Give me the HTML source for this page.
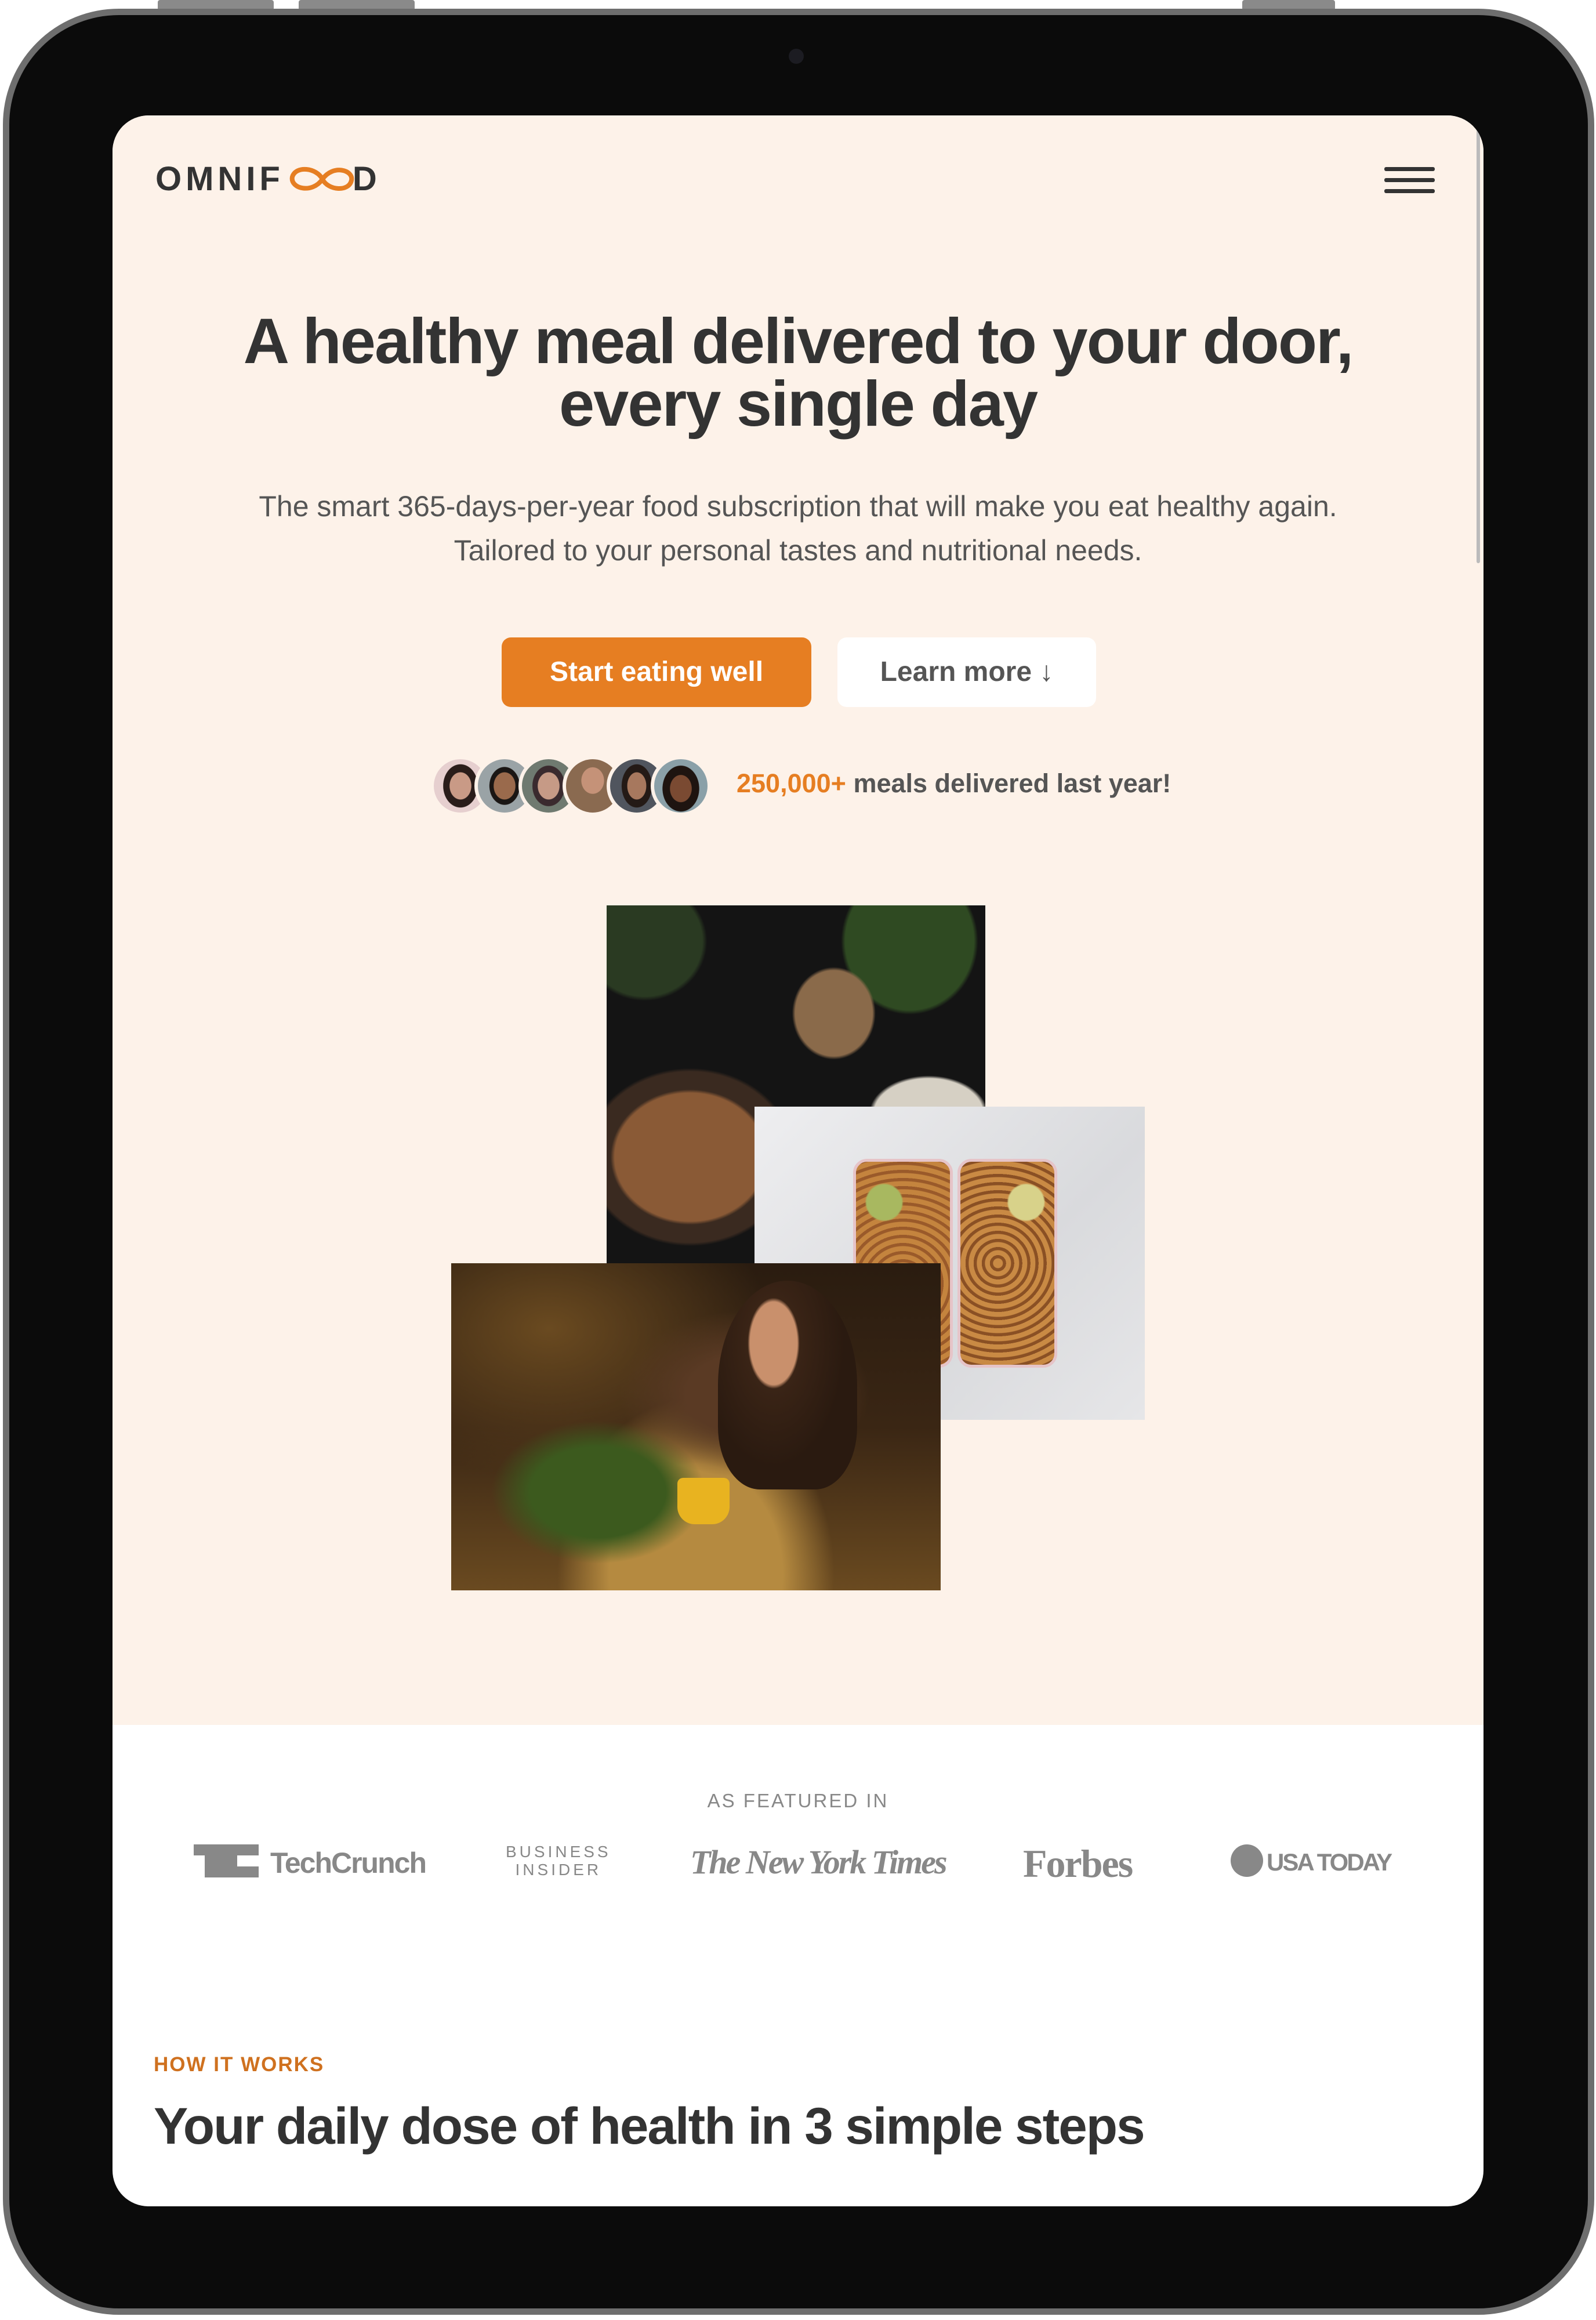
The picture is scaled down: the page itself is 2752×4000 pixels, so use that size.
<!DOCTYPE html>
<html><head><meta charset="utf-8">
<style>
*{margin:0;padding:0;box-sizing:border-box}
html,body{width:2752px;height:4000px;background:#fff;overflow:hidden;font-family:"Liberation Sans",sans-serif}
.abs{position:absolute}
.frame{left:5px;top:15px;width:2744px;height:3976px;border-radius:200px;background:#0b0b0b;border:11px solid #6e6e6e}
.screen{left:194px;top:199px;width:2364px;height:3605px;border-radius:62px;background:#fff;overflow:hidden}
.hero{left:0;top:0;width:2364px;height:2775px;background:#fdf2e9}
.t{position:absolute;white-space:nowrap}
</style></head><body>
<div class="abs" style="left:272px;top:0;width:200px;height:18px;background:#8a8a8a;border-radius:4px"></div>
<div class="abs" style="left:515px;top:0;width:200px;height:18px;background:#8a8a8a;border-radius:4px"></div>
<div class="abs" style="left:2142px;top:0;width:160px;height:18px;background:#8a8a8a;border-radius:4px"></div>
<div class="abs frame"></div>
<div class="abs" style="left:1360px;top:84px;width:26px;height:26px;border-radius:50%;background:#1c1c22"></div>
<div class="abs screen">
 <div class="abs hero"></div>
 <!-- logo -->
 <div class="t" style="left:74px;top:80px;font-size:58px;letter-spacing:7px;color:#333;font-weight:700;line-height:60px">OMNIF<span style="display:inline-block;width:118px"></span>D</div>
 <svg class="abs" style="left:302px;top:82px" width="120" height="56" viewBox="0 0 120 56"><path d="M60 28 C50 8 14 4 8 24 C4 44 42 54 60 28 C78 2 114 12 110 30 C106 50 70 48 60 28Z" fill="none" stroke="#e67e22" stroke-width="8"/></svg>
 <!-- hamburger -->
 <div class="abs" style="left:2193px;top:89px;width:87px;height:7px;background:#333;border-radius:3px"></div>
 <div class="abs" style="left:2193px;top:108px;width:87px;height:7px;background:#333;border-radius:3px"></div>
 <div class="abs" style="left:2193px;top:127px;width:87px;height:7px;background:#333;border-radius:3px"></div>
 <div class="abs" style="left:2352px;top:0;width:6px;height:772px;background:#bbb;border-radius:3px"></div>
 <!-- headline -->
 <div class="t" style="left:0;width:2364px;top:336px;text-align:center;font-size:110px;line-height:108px;font-weight:700;color:#333;letter-spacing:-2px">A healthy meal delivered to your door,<br>every single day</div>
 <div class="t" style="left:0;width:2364px;top:636px;text-align:center;font-size:50px;line-height:76px;color:#555">The smart 365-days-per-year food subscription that will make you eat healthy again.<br>Tailored to your personal tastes and nutritional needs.</div>
 <!-- buttons -->
 <div class="abs" style="left:671px;top:900px;width:534px;height:120px;background:#e67e22;border-radius:16px;color:#fff;font-weight:700;font-size:48px;line-height:120px;text-align:center">Start eating well</div>
 <div class="abs" style="left:1250px;top:900px;width:446px;height:120px;background:#fff;border-radius:16px;color:#555;font-weight:700;font-size:48px;line-height:120px;text-align:center">Learn more ↓</div>
 <!-- avatars -->
 <div class="abs" style="left:548px;top:1104px;height:104px;width:500px">
  <div class="abs" style="left:0;width:104px;height:104px;border-radius:50%;border:6px solid #fdf2e9;background:radial-gradient(ellipse 40% 50% at 50% 50%,#c99a86 50%,#2a1d1a 52%,#2a1d1a 80%,#e6cfcf 82%)"></div>
  <div class="abs" style="left:76px;width:104px;height:104px;border-radius:50%;border:6px solid #fdf2e9;background:radial-gradient(ellipse 40% 50% at 50% 50%,#9a6a4c 50%,#1a1614 52%,#1a1614 70%,#9aa3a6 72%)"></div>
  <div class="abs" style="left:152px;width:104px;height:104px;border-radius:50%;border:6px solid #fdf2e9;background:radial-gradient(ellipse 40% 50% at 50% 50%,#c69a86 50%,#3a2a2e 52%,#3a2a2e 75%,#6f7a70 77%)"></div>
  <div class="abs" style="left:228px;width:104px;height:104px;border-radius:50%;border:6px solid #fdf2e9;background:radial-gradient(ellipse 30% 35% at 50% 40%,#c59278 70%,#8a6a50 72%),#25324a"></div>
  <div class="abs" style="left:304px;width:104px;height:104px;border-radius:50%;border:6px solid #fdf2e9;background:radial-gradient(ellipse 35% 50% at 50% 50%,#a7785e 50%,#241a16 52%,#241a16 80%,#50555e 82%)"></div>
  <div class="abs" style="left:380px;width:104px;height:104px;border-radius:50%;border:6px solid #fdf2e9;background:radial-gradient(ellipse 40% 50% at 50% 55%,#7a4a32 50%,#1e1410 52%,#1e1410 85%,#8aa0a8 87%)"></div>
 </div>
 <div class="t" style="left:1076px;top:1124px;font-size:45px;line-height:56px;font-weight:700;color:#555"><span style="color:#e67e22">250,000+</span> meals delivered last year!</div>
 <!-- images -->
 <div class="abs" style="left:852px;top:1362px;width:653px;height:620px;background:radial-gradient(ellipse at 60% 30%,#8a6a4a 0 12%,transparent 13%),radial-gradient(ellipse at 85% 58%,#d6d0c4 0 12%,transparent 13%),radial-gradient(ellipse at 22% 70%,#8a5a36 0 18%,#3a2a20 19% 24%,transparent 25%),radial-gradient(ellipse at 80% 10%,#2f4a22 0 15%,transparent 16%),radial-gradient(ellipse at 10% 10%,#2a3a22 0 12%,transparent 13%),#141414"></div>
 <div class="abs" style="left:1107px;top:1709px;width:673px;height:540px;background:linear-gradient(135deg,#eeeef0,#d9dadd 60%,#e6e6e8)">
  <div class="abs" style="left:170px;top:90px;width:172px;height:360px;border-radius:24px;border:5px solid #e6c4c8;background:radial-gradient(circle at 30% 20%,#a8b860 0 10%,transparent 11%),repeating-radial-gradient(circle at 50% 60%,#c4843e 0 8px,#9a5a2a 9px 14px)"></div>
  <div class="abs" style="left:350px;top:90px;width:172px;height:360px;border-radius:24px;border:5px solid #e6c4c8;background:radial-gradient(circle at 70% 20%,#d8d28a 0 10%,transparent 11%),repeating-radial-gradient(circle at 40% 50%,#c98a44 0 8px,#8a5024 9px 14px)"></div>
 </div>
 <div class="abs" style="left:584px;top:1979px;width:844px;height:564px;background:radial-gradient(ellipse at 60% 40%,#5a3a24 0 14%,transparent 30%),radial-gradient(ellipse at 30% 70%,#3c5a1e 0 14%,transparent 22%),radial-gradient(ellipse at 50% 95%,#b58a40 0 25%,transparent 40%),radial-gradient(ellipse at 20% 20%,#6a4a20,transparent 40%),linear-gradient(180deg,#2a1c10,#3a2614 50%,#6a4a20)">
  <div class="abs" style="left:460px;top:30px;width:240px;height:360px;border-radius:50% 50% 30% 30%;background:radial-gradient(ellipse at 40% 30%,#c9906c 0 20%,#3a2416 22%,#2a1a10 60%)"></div>
  <div class="abs" style="left:390px;top:370px;width:90px;height:80px;border-radius:10px 10px 30px 30px;background:#e8b320"></div>
 </div>
 <!-- featured -->
 <div class="t" style="left:0;width:2364px;top:2887px;text-align:center;font-size:33px;letter-spacing:3px;color:#888;font-weight:500">AS FEATURED IN</div>
 <div class="abs" style="left:140px;top:2981px;width:75px;height:19px;background:#888"></div>
 <div class="abs" style="left:159px;top:2981px;width:37px;height:57px;background:#888"></div>
 <div class="abs" style="left:215px;top:2981px;width:37px;height:19px;background:#888"></div>
 <div class="abs" style="left:196px;top:3019px;width:56px;height:19px;background:#888"></div>
 <div class="abs" style="left:196px;top:2981px;width:19px;height:57px;background:#888"></div>
 <div class="t" style="left:272px;top:2984px;font-size:50px;font-weight:700;color:#888;letter-spacing:-2px">TechCrunch</div>
 <div class="t" style="left:678px;top:2978px;font-size:28px;line-height:31px;color:#888;letter-spacing:5px;text-align:center">BUSINESS<br>INSIDER</div>
 <div class="t" style="left:996px;top:2978px;font-size:58px;font-family:'Liberation Serif',serif;font-weight:700;color:#888;letter-spacing:-3px;font-style:italic">The New York Times</div>
 <div class="t" style="left:1570px;top:2975px;font-size:68px;font-family:'Liberation Serif',serif;font-weight:700;color:#888;letter-spacing:-2px">Forbes</div>
 <div class="abs" style="left:1928px;top:2981px;width:56px;height:56px;border-radius:50%;background:#888"></div>
 <div class="t" style="left:1990px;top:2988px;font-size:42px;font-weight:700;color:#888;letter-spacing:-3px">USA TODAY</div>
 <!-- how it works -->
 <div class="t" style="left:71px;top:3341px;font-size:35px;letter-spacing:2px;color:#cf711f;font-weight:700">HOW IT WORKS</div>
 <div class="t" style="left:71px;top:3415px;font-size:89px;font-weight:700;color:#333;letter-spacing:-2px">Your daily dose of health in 3 simple steps</div>
</div>
</body></html>
